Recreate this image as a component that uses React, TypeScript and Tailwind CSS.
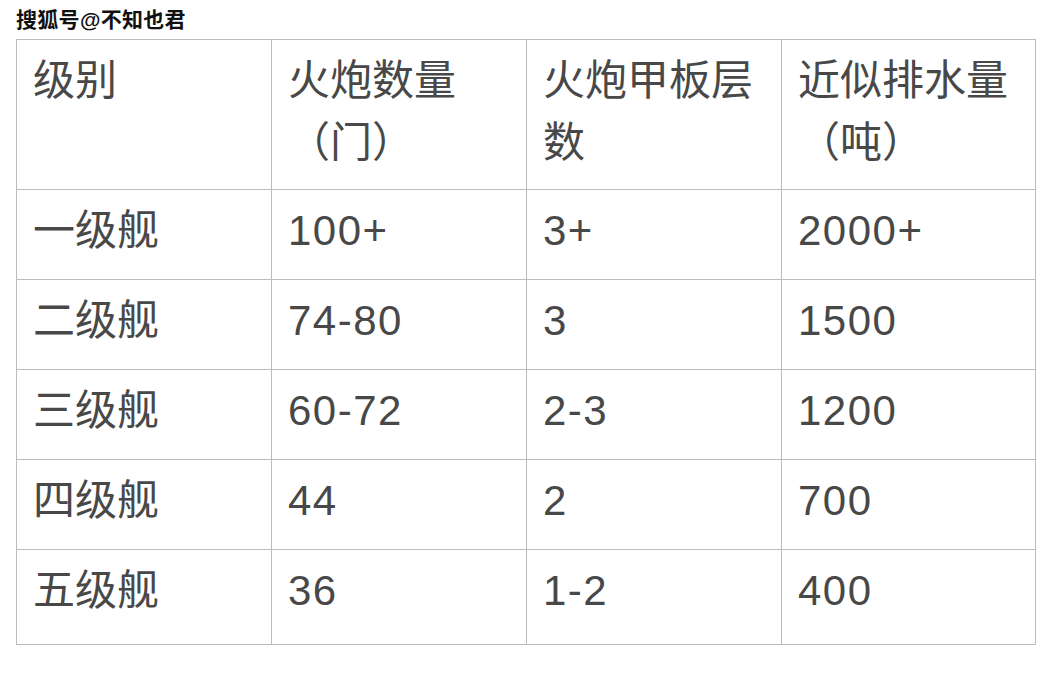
import React from "react";

const header = [
  ["级别"],
  ["火炮数量", "（门）"],
  ["火炮甲板层", "数"],
  ["近似排水量", "（吨）"],
];

const rows = [
  ["一级舰", "100+", "3+", "2000+"],
  ["二级舰", "74-80", "3", "1500"],
  ["三级舰", "60-72", "2-3", "1200"],
  ["四级舰", "44", "2", "700"],
  ["五级舰", "36", "1-2", "400"],
];

export default function App() {
  return (
    <div
      className="w-[1057px] h-[674px] bg-white relative"
      style={{ fontFamily: '"Liberation Sans", "Noto Sans CJK SC", sans-serif' }}
    >
      <div className="h-[39px] pl-[16px] pt-[7px] text-[21px] leading-[26px] font-bold text-[#111] [text-shadow:0_0_2px_#fff,0_0_1px_#fff] tracking-[0.3px]">
        搜狐号@不知也君
      </div>
      <div className="ml-[16px] w-[1020px] grid grid-cols-[254px_254px_254px_253px] grid-rows-[149px_89px_89px_89px_89px_94px] gap-px p-px bg-[#bcbcbc]">
        {header.map((h, i) => (
          <div key={i} className="bg-white pl-[16px] pt-[10px] text-[42px] leading-[62px] text-[#484848]">
            {h.map((l, j) => (
              <div key={j} className="whitespace-nowrap">{l}</div>
            ))}
          </div>
        ))}
        {rows.map((r, i) =>
          r.map((c, j) => (
            <div
              key={`${i}-${j}`}
              className={
                j === 0
                  ? "bg-white pl-[16px] pt-[10px] text-[42px] leading-[62px] text-[#484848]"
                  : "bg-white pl-[16px] pt-[10px] text-[42px] leading-[62px] text-[#484848] tracking-[1.5px]"
              }
            >
              {c}
            </div>
          ))
        )}
      </div>
    </div>
  );
}
